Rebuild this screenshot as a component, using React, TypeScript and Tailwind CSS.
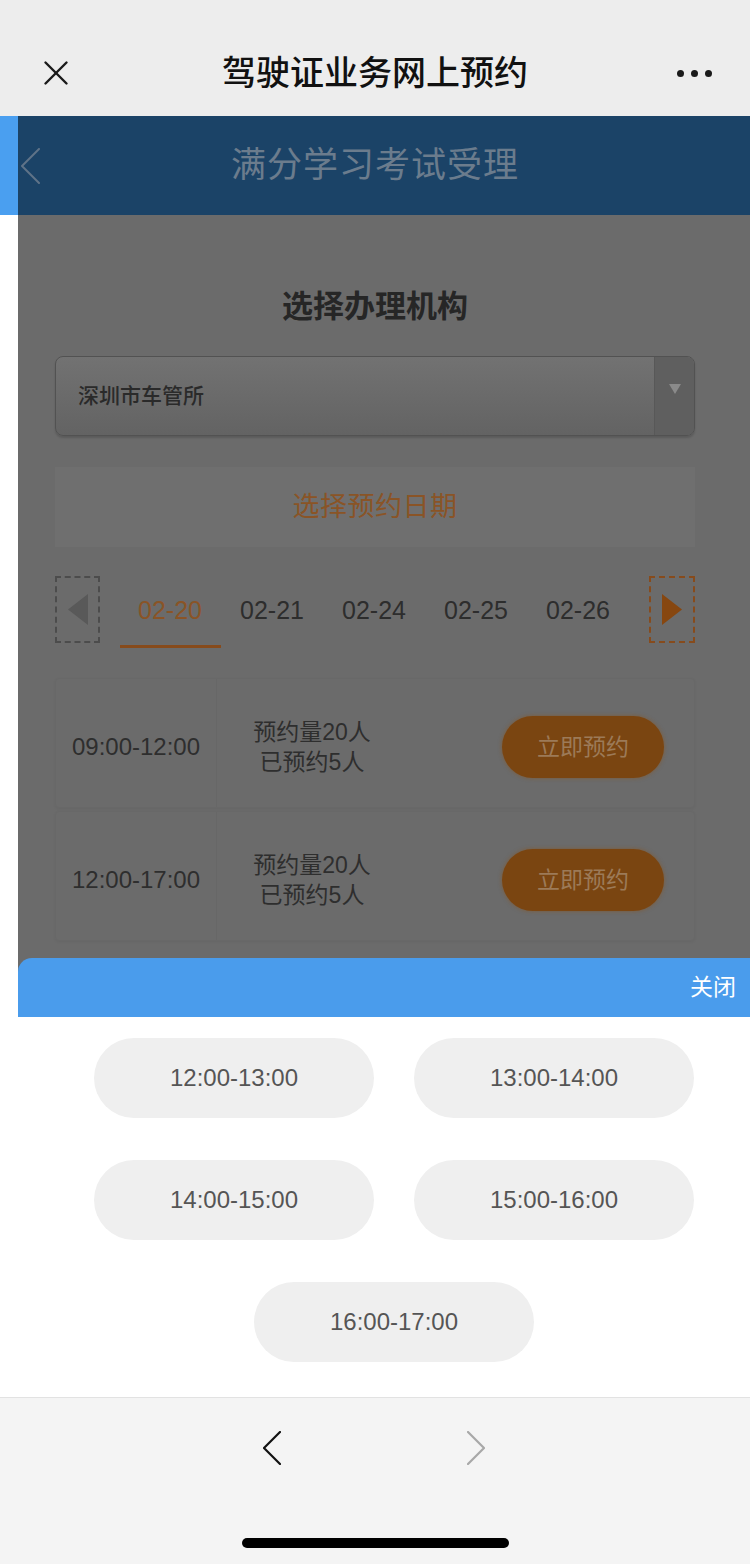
import { X } from 'lucide-react';

const DATES = ['02-20', '02-21', '02-24', '02-25', '02-26'];

const SLOTS = [
  { time: '09:00-12:00' },
  { time: '12:00-17:00' },
];

const CHIPS = ['12:00-13:00', '13:00-14:00', '14:00-15:00', '15:00-16:00'];

const font = { fontFamily: '"Liberation Sans", "Noto Sans CJK SC", sans-serif' };

function Chevron({ dir, color, w, h, stroke }: { dir: 'left' | 'right'; color: string; w: number; h: number; stroke: number }) {
  const pts = dir === 'left' ? `${w - 1},1 1,${h / 2} ${w - 1},${h - 1}` : `1,1 ${w - 1},${h / 2} 1,${h - 1}`;
  return (
    <svg width={w} height={h} viewBox={`0 0 ${w} ${h}`} fill="none">
      <polyline points={pts} stroke={color} strokeWidth={stroke} strokeLinecap="round" strokeLinejoin="round" />
    </svg>
  );
}

function TopBar() {
  return (
    <div className="h-[116px] bg-[#ededed] flex items-end pb-[22px] pl-[35px] pr-[38px]">
      <X className="w-[42px] h-[42px] text-[#1a1a1a]" strokeWidth={1.4} />
      <div className="flex-1 text-center text-[34px] font-medium text-[#111] leading-[42px] pr-[4px]">
        驾驶证业务网上预约
      </div>
      <div className="flex gap-[7px] items-center h-[42px]">
        <span className="w-[7px] h-[7px] rounded-full bg-[#1a1a1a]" />
        <span className="w-[7px] h-[7px] rounded-full bg-[#1a1a1a]" />
        <span className="w-[7px] h-[7px] rounded-full bg-[#1a1a1a]" />
      </div>
    </div>
  );
}

function Triangle({ dir, color }: { dir: 'left' | 'right' | 'down'; color: string }) {
  if (dir === 'down') {
    return (
      <svg width={12} height={10} viewBox="0 0 12 10">
        <polygon points="0,0 12,0 6,10" fill={color} />
      </svg>
    );
  }
  const pts = dir === 'left' ? '20,0 20,31 0,15.5' : '0,0 0,31 20,15.5';
  return (
    <svg width={20} height={31} viewBox="0 0 20 31">
      <polygon points={pts} fill={color} />
    </svg>
  );
}

function Page() {
  return (
    <div className="flex-1 bg-[#6b6b6b] overflow-hidden flex flex-col">
      {/* dimmed page header */}
      <div className="h-[99px] bg-[#1b4367] flex items-center relative">
        <div className="absolute left-[3px] top-[32px]">
          <Chevron dir="left" color="#5f7388" w={19} h={36} stroke={2} />
        </div>
        <div className="w-full text-center text-[35px] text-[#6b7c8d] tracking-[1px] pr-[18px]">满分学习考试受理</div>
      </div>

      <div className="pl-[37px] pr-[55px] flex flex-col">
        <div className="text-center text-[31px] font-bold text-[#262626] mt-[74px] leading-[36px]">选择办理机构</div>

        {/* dropdown */}
        <div className="mt-[31px] h-[80px] rounded-[8px] border border-[#525252] bg-gradient-to-b from-[#727272] to-[#636363] flex shadow-[0_2px_2px_rgba(0,0,0,0.15)] overflow-hidden">
          <div className="flex-1 flex items-center pl-[22px] text-[21px] text-[#2a2a2a] font-medium">深圳市车管所</div>
          <div className="w-[40px] bg-[#5f5f5f] border-l border-[#585858] flex justify-center pt-[27px]">
            <Triangle dir="down" color="#8a8a8a" />
          </div>
        </div>

        {/* date title */}
        <div className="mt-[31px] h-[80px] bg-[#6f6f6f] flex items-center justify-center text-[27px] text-[#8a5426] tracking-[0.5px]">
          选择预约日期
        </div>

        {/* date row */}
        <div className="mt-[29px] flex items-start">
          <div className="w-[45px] h-[67px] border-2 border-dashed border-[#4c4c4c] flex items-center justify-center">
            <Triangle dir="left" color="#595959" />
          </div>
          <div className="ml-[19px] flex">
            {DATES.map((d, i) => (
              <div key={d} className="w-[102px] h-[72px] flex flex-col items-center">
                <div className={`h-[69px] flex items-center text-[25px] ${i === 0 ? 'text-[#8a5426]' : 'text-[#2d2d2d]'}`}>{d}</div>
                {i === 0 && <div className="w-[101px] h-[3px] bg-[#874b1c]" />}
              </div>
            ))}
          </div>
          <div className="ml-auto w-[46px] h-[67px] border-2 border-dashed border-[#874b1c] flex items-center justify-center">
            <Triangle dir="right" color="#874710" />
          </div>
        </div>

        {/* slots */}
        <div className="mt-[30px] flex flex-col gap-[3px]">
          {SLOTS.map((s) => (
            <div key={s.time} className="h-[130px] flex border border-[#686868] rounded-[4px] shadow-[0_1px_3px_rgba(0,0,0,0.05)]">
              <div className="w-[161px] border-r border-[#676767] flex items-center justify-center pt-[8px] text-[24px] text-[#2e2e2e]">{s.time}</div>
              <div className="w-[192px] flex flex-col items-center justify-center pt-[8px] text-[23px] text-[#2e2e2e] leading-[30px] pr-[2px]">
                <span>预约量20人</span>
                <span>已预约5人</span>
              </div>
              <div className="flex-1 flex items-center justify-end pr-[30px] pt-[8px]">
                <div className="w-[162px] h-[62px] rounded-full bg-[#7a4511] shadow-[0_0_4px_rgba(140,80,20,0.6)] flex items-center justify-center text-[23px] text-[#9c7a58]">
                  立即预约
                </div>
              </div>
            </div>
          ))}
        </div>
      </div>
    </div>
  );
}

export default function App() {
  return (
    <div className="w-[750px] h-[1564px] bg-white flex flex-col overflow-hidden" style={font}>
      <TopBar />

      <div className="h-[842px] flex">
        <div className="w-[18px] flex flex-col">
          <div className="h-[99px] bg-[#4a9ff0]" />
          <div className="flex-1 bg-white" />
        </div>
        <Page />
      </div>

      {/* bottom sheet */}
      <div className="h-[59px] flex">
        <div className="w-[18px] bg-white" />
        <div className="flex-1 bg-[#6b6b6b]">
          <div className="h-full bg-[#4a9cec] rounded-tl-[14px] flex items-center justify-end pr-[14px] text-[23px] text-white">
            关闭
          </div>
        </div>
      </div>

      <div className="h-[380px] bg-white pt-[21px] pl-[94px]">
        <div className="grid grid-cols-[280px_280px] gap-x-[40px] gap-y-[42px] w-[600px]">
          {CHIPS.map((c) => (
            <div key={c} className="h-[80px] rounded-full bg-[#efefef] flex items-center justify-center text-[24px] text-[#555]">{c}</div>
          ))}
          <div className="col-span-2 flex justify-center">
            <div className="w-[280px] h-[80px] rounded-full bg-[#efefef] flex items-center justify-center text-[24px] text-[#555]">16:00-17:00</div>
          </div>
        </div>
      </div>

      {/* browser nav */}
      <div className="flex-1 bg-[#f4f4f4] border-t border-[#e2e2e2] flex flex-col items-center">
        <div className="h-[99px] flex items-center gap-[186px] pr-[2px]">
          <Chevron dir="left" color="#111" w={18} h={34} stroke={2.2} />
          <Chevron dir="right" color="#a8a8a8" w={18} h={34} stroke={2.2} />
        </div>
        <div className="mt-[41px] w-[267px] h-[10px] rounded-full bg-black" />
      </div>
    </div>
  );
}
